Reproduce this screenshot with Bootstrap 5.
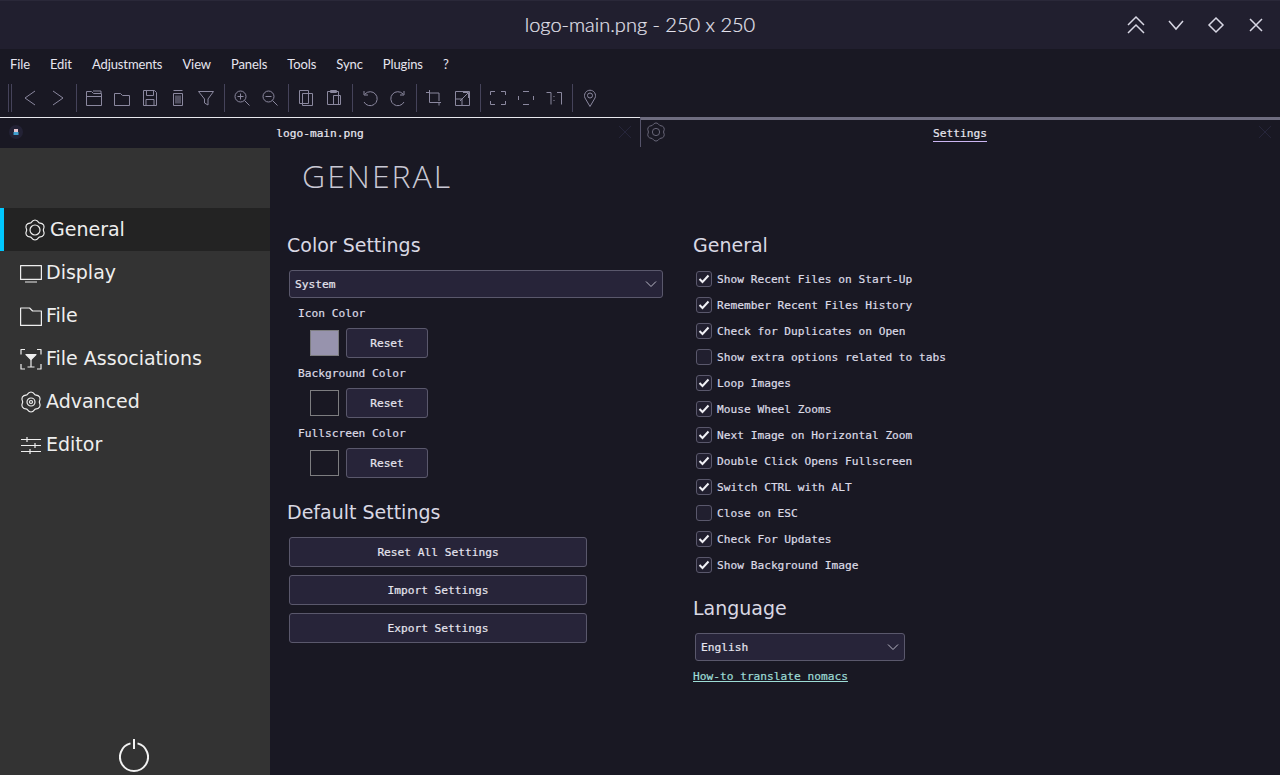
<!DOCTYPE html>
<html lang="en"><head><meta charset="utf-8"><title>nomacs</title>
<link href="https://cdn.jsdelivr.net/npm/bootstrap@5.3.0/dist/css/bootstrap.min.css" rel="stylesheet">
<style>
html,body{height:775px;overflow:hidden}
body{background:#191823;color:#dcdbe6;font-family:"DejaVu Sans Mono",monospace;font-size:11.2px;-webkit-text-stroke:.2px}
svg{display:block;fill:none;stroke-width:1}
.ttl{height:49px;background:#211f2f;border-top:1px solid #2a2839;position:relative;font-family:Lato,sans-serif;font-weight:300;font-size:20px;color:#e4e3ee;line-height:47px;-webkit-text-stroke:.2px}
.winbtns{position:absolute;right:4px;top:4px;gap:0}
.winbtn{width:40px;height:40px;display:flex;align-items:center;justify-content:center}
.winbtn svg{stroke:#d8d7e4;stroke-width:1.5}
.menubar{height:32px;padding:0 0 0 10px;gap:20px;font-family:Lato,sans-serif;font-weight:400;font-size:13px;letter-spacing:-.1px;color:#e6e5ef;-webkit-text-stroke:0}
.tools{height:36px;padding:0 0 2px 8px}
.hnd{width:1px;height:28px;background:#45435a;margin-right:2px}
.hnd+.hnd{margin-right:4px}
.tsep{width:8px;height:28px;display:flex;justify-content:center}
.tsep::before{content:"";width:1px;background:#45435a}
.tbtn{width:28px;height:28px;display:flex;align-items:center;justify-content:center}
.tbtn svg{stroke:#8b889f}
.tabstrip{height:31px;border-top:1px solid #e8e8ee}
.tabcell{width:640px;height:30px;position:relative;font-size:11.2px}
.tabcell.act{border-left:1px solid #55536a;border-top:3px solid #6f6d80;height:30px;margin-top:-1px;padding-right:1px}
.tabico{position:absolute;left:5px;top:4px}
.tabx{position:absolute;right:8px;top:7px;stroke:#26253a}
.tablbl{color:#e8e7f0;padding-top:2px}
.act .tablbl{border-bottom:1px solid #cbb6f2;line-height:15px;padding-top:0}
.mainrow{height:627px}
.side{width:270px;background:#333;color:#eee;font-family:"DejaVu Sans",sans-serif;font-size:19px;padding-top:60px;position:relative;-webkit-text-stroke:0}
.sitem{height:43px;padding-left:20px;gap:4px}
.sitem svg{stroke:#eee;stroke-width:1.2;stroke-linejoin:round}
.sitem.cur{background:#232323;border-left:4px solid #00c8ff}
.powr{position:absolute;left:119px;bottom:2px;stroke:#f2f2f2;stroke-width:2}
.pane{flex:1;position:relative}
.bigttl{font-family:"Open Sans",sans-serif;font-weight:300;font-size:32px;letter-spacing:2px;color:#c9c8d4;padding:6px 0 0 32px;line-height:44px;height:60px;-webkit-text-stroke:0}
.cols{padding-left:17px}
.colL{width:406px}
.sect{font-family:"DejaVu Sans",sans-serif;font-size:19px;color:#d9d8e4;line-height:24px;height:24px;-webkit-text-stroke:0}
.selx{background-color:#272439;border:1px solid #5a586c;border-radius:3px;color:#e6e5ef;font-size:11.2px;height:28px;line-height:26px;padding:1px 24px 0 5px;margin-left:2px;width:374px;background-position:right 4px center;background-size:14px 14px;background-image:url("data:image/svg+xml,%3csvg xmlns='http://www.w3.org/2000/svg' viewBox='0 0 14 14'%3e%3cpath fill='none' stroke='%23b9b8c6' d='M2 4.500l5 5 5-5'/%3e%3c/svg%3e");font-family:inherit}
.langsel{width:210px}
.swbtn{background:#272439;border:1px solid #5a586c;border-radius:3px;color:#e6e5ef;font-size:11.2px;height:30px;padding:1px 0 0;line-height:28px;--bs-btn-hover-bg:#272439}
.clrlab{height:30px;line-height:30px;padding:1px 0 0 11px}
.clrrow{height:30px;padding-left:23px;gap:7px}
.swatch{width:29px;height:26px;border:1px solid #7d7d80}
.rsbtn{width:82px}
.stbtn{width:298px;display:block;margin:0 0 8px 2px}
.chk{height:26px;padding-left:3px;gap:5px;margin:0;min-height:0}
.chk .form-check-input{width:16px;height:16px;margin:-2px 0 0;float:none;background-color:#211f2f;border:1px solid #5a586c;border-radius:3px}
.chk .form-check-input:checked{background-image:url("data:image/svg+xml,%3csvg xmlns='http://www.w3.org/2000/svg' viewBox='0 0 16 16'%3e%3cpath fill='none' stroke='%23f0f0f5' stroke-width='2' d='M3.500 8l3 3 6-6.500'/%3e%3c/svg%3e");background-size:16px}
.lnk{color:#9ddcd6;font-size:11.2px;display:block;line-height:16px}
</style></head><body>
<svg width="0" height="0" class="position-absolute"><defs><path id="gearshape" d="M6.850 3.810Q11-1.800 15.150 3.810Q22.090 4.600 19.300 11Q22.090 17.400 15.150 18.190Q11 23.800 6.850 18.190Q-.09 17.400 2.700 11Q-.09 4.600 6.850 3.810Z"/></defs></svg>
<div class="ttl text-center">logo-main.png - 250 x 250
<div class="winbtns d-flex">
<div class="winbtn"><svg width="20" height="20" viewBox="0 0 20 20"><path d="M2 10l8-8 8 8M2 18l8-8 8 8"/></svg></div>
<div class="winbtn"><svg width="20" height="20" viewBox="0 0 20 20"><path d="M3 6l7 8 7-8"/></svg></div>
<div class="winbtn"><svg width="20" height="20" viewBox="0 0 20 20"><path d="M10 3l7 7-7 7-7-7z"/></svg></div>
<div class="winbtn"><svg width="20" height="20" viewBox="0 0 20 20"><path d="M4 4l12 12M16 4L4 16"/></svg></div>
</div></div>
<div class="menubar d-flex align-items-center"><span>File</span><span>Edit</span><span>Adjustments</span><span>View</span><span>Panels</span><span>Tools</span><span>Sync</span><span>Plugins</span><span>?</span></div>
<div class="tools d-flex align-items-center">
<div class="hnd"></div><div class="hnd"></div>
<div class="tbtn"><svg width="20" height="20" viewBox="0 0 20 20"><path d="M15 3L5 10l10 7"/></svg></div>
<div class="tbtn"><svg width="20" height="20" viewBox="0 0 20 20"><path d="M5 3l10 7-10 7"/></svg></div>
<div class="tsep"></div>
<div class="tbtn"><svg width="20" height="20" viewBox="0 0 20 20"><path d="M2.500 17.500v-14h5l2 2h8v12zM2.500 8.500h15M9 3h8v2"/></svg></div>
<div class="tbtn"><svg width="20" height="20" viewBox="0 0 20 20"><path d="M2.500 17.500v-12h6l2 2h7v10z"/></svg></div>
<div class="tbtn"><svg width="20" height="20" viewBox="0 0 20 20"><path d="M3.500 2.500h11l2 2v13h-13zM6.500 2.500v5h7v-5M6 17.500v-6h8v6"/></svg></div>
<div class="tbtn"><svg width="20" height="20" viewBox="0 0 20 20"><path d="M5.500 2.500h9M5.500 5.500h9v12h-9zM8 7.500v8M10 7.500v8M12 7.500v8"/></svg></div>
<div class="tbtn"><svg width="20" height="20" viewBox="0 0 20 20"><path d="M2.500 3.500h15L12 11v6l-3.500-2v-4z"/></svg></div>
<div class="tsep"></div>
<div class="tbtn"><svg width="20" height="20" viewBox="0 0 20 20"><circle cx="8.500" cy="8.500" r="5.500"/><path d="M12.500 12.500l5 5M8.500 5.500v6M5.500 8.500h6"/></svg></div>
<div class="tbtn"><svg width="20" height="20" viewBox="0 0 20 20"><circle cx="8.500" cy="8.500" r="5.500"/><path d="M12.500 12.500l5 5M5.500 8.500h6"/></svg></div>
<div class="tsep"></div>
<div class="tbtn"><svg width="20" height="20" viewBox="0 0 20 20"><path d="M3.500 2.500h9v13h-9zM6.500 5.500h10v12h-10z"/></svg></div>
<div class="tbtn"><svg width="20" height="20" viewBox="0 0 20 20"><path d="M3.500 3.500h11v13h-11zM6.500 2.500h6v2h-6zM9.500 7.500h7v9h-7z"/></svg></div>
<div class="tsep"></div>
<div class="tbtn"><svg width="20" height="20" viewBox="0 0 20 20" stroke-width="1.300"><path d="M5 6a7 7 0 1 1-1 8M4 3v4h4"/></svg></div>
<div class="tbtn"><svg width="20" height="20" viewBox="0 0 20 20" stroke-width="1.300"><path d="M15 6a7 7 0 1 0 1 8M16 3v4h-4"/></svg></div>
<div class="tsep"></div>
<div class="tbtn"><svg width="20" height="20" viewBox="0 0 20 20"><path d="M2 4.500h3M5.500 2v12.500H17M5.500 5h9.500v8M15 15v2.500"/></svg></div>
<div class="tbtn"><svg width="20" height="20" viewBox="0 0 20 20"><path d="M3.500 3.500h14v14h-14zM3.500 11h6.500v6.500M8 13l8-8M11 4.500h5.500V10"/></svg></div>
<div class="tsep"></div>
<div class="tbtn"><svg width="20" height="20" viewBox="0 0 20 20"><path d="M2.500 7V3.500H7M13 3.500h4.500V7M2.500 13v3.500H7M13 16.500h4.500V13"/></svg></div>
<div class="tbtn"><svg width="20" height="20" viewBox="0 0 20 20"><path d="M7 3.500h6M7 16.500h6M2.500 8v4M17.500 8v4"/></svg></div>
<div class="tbtn"><svg width="20" height="20" viewBox="0 0 20 20"><path d="M2.500 4.500h4.500v12M13 4.500h4.500v12M10 8v1M10 12v1"/></svg></div>
<div class="tsep"></div>
<div class="tbtn"><svg width="20" height="20" viewBox="0 0 20 20"><path d="M10 18.500L5 10a5.500 5.500 0 1 1 10 0z"/><circle cx="10" cy="7.500" r="2.500"/></svg></div>
</div>
<div class="tabstrip d-flex">
<div class="tabcell d-flex align-items-center justify-content-center">
<svg class="tabico" width="22" height="20" viewBox="0 0 22 20"><circle cx="11" cy="10" r="7" fill="#232235" stroke="none"/><rect x="9" y="7" width="4" height="3" fill="#e6c6d0" stroke="none"/><rect x="8.500" y="10" width="5" height="3" fill="#3f9fd0" stroke="none"/></svg>
<span class="tablbl">logo-main.png</span>
<svg class="tabx" width="14" height="14" viewBox="0 0 14 14"><path d="M1 1l12 12M13 1L1 13"/></svg></div>
<div class="tabcell act d-flex align-items-center justify-content-center">
<svg class="tabico" style="top:2px" width="20" height="20" viewBox="0 0 22 22" stroke="#6f6d80"><use href="#gearshape"/><circle cx="11" cy="11" r="4"/></svg>
<span class="tablbl">Settings</span>
<svg class="tabx" style="top:5px" width="14" height="14" viewBox="0 0 14 14"><path d="M1 1l12 12M13 1L1 13"/></svg></div>
</div>
<div class="mainrow d-flex">
<nav class="side">
<div class="sitem cur d-flex align-items-center"><svg width="22" height="22" viewBox="0 0 22 22"><use href="#gearshape"/><circle cx="11" cy="11" r="5"/></svg><span>General</span></div>
<div class="sitem d-flex align-items-center"><svg width="22" height="22" viewBox="0 0 22 22"><path d="M.6 3.600h20.800v13.800H.6zM5 20h12"/></svg><span>Display</span></div>
<div class="sitem d-flex align-items-center"><svg width="22" height="22" viewBox="0 0 22 22"><path d="M.6 20.400V3h9l3 3h8.800v14.400z"/></svg><span>File</span></div>
<div class="sitem d-flex align-items-center"><svg width="22" height="22" viewBox="0 0 22 22"><path d="M5 1.500H1v5M17 1.500h4v5M1 16v5h4M21 16v5h-4"/><path d="M6 6.500h10l-5 5z" fill="#eee"/><path d="M11 11v7.500M7.500 19h7"/></svg><span>File Associations</span></div>
<div class="sitem d-flex align-items-center"><svg width="22" height="22" viewBox="0 0 22 22"><use href="#gearshape"/><circle cx="11" cy="11" r="4"/><circle cx="11" cy="11" r="1.500"/></svg><span>Advanced</span></div>
<div class="sitem d-flex align-items-center"><svg width="22" height="22" viewBox="0 0 22 22"><path d="M1 5.500h20M1 11.500h20M1 17.500h20M7 3v5M15 9v5M10 15v5"/></svg><span>Editor</span></div>
<svg class="powr" width="30" height="34" viewBox="0 0 30 34"><path d="M11.500 4.400a14 14 0 1 0 7 0M15 0v10"/></svg>
</nav>
<main class="pane">
<div class="bigttl">GENERAL</div>
<div class="cols d-flex">
<div class="colL">
<div class="sect" style="margin-top:25px;margin-bottom:13px">Color Settings</div>
<select class="form-select selx" aria-label="Color"><option>System</option></select>
<div class="clrlab">Icon Color</div>
<div class="clrrow d-flex align-items-center"><div class="swatch" style="background:#9793ad"></div><button class="btn swbtn rsbtn">Reset</button></div>
<div class="clrlab">Background Color</div>
<div class="clrrow d-flex align-items-center"><div class="swatch"></div><button class="btn swbtn rsbtn">Reset</button></div>
<div class="clrlab">Fullscreen Color</div>
<div class="clrrow d-flex align-items-center"><div class="swatch"></div><button class="btn swbtn rsbtn">Reset</button></div>
<div class="sect" style="margin-top:22px;margin-bottom:13px">Default Settings</div>
<button class="btn swbtn stbtn">Reset All Settings</button>
<button class="btn swbtn stbtn">Import Settings</button>
<button class="btn swbtn stbtn">Export Settings</button>
</div>
<div>
<div class="sect" style="margin-top:25px;margin-bottom:10px">General</div>
<label class="chk form-check d-flex align-items-center"><input class="form-check-input" type="checkbox" checked><span>Show Recent Files on Start-Up</span></label>
<label class="chk form-check d-flex align-items-center"><input class="form-check-input" type="checkbox" checked><span>Remember Recent Files History</span></label>
<label class="chk form-check d-flex align-items-center"><input class="form-check-input" type="checkbox" checked><span>Check for Duplicates on Open</span></label>
<label class="chk form-check d-flex align-items-center"><input class="form-check-input" type="checkbox"><span>Show extra options related to tabs</span></label>
<label class="chk form-check d-flex align-items-center"><input class="form-check-input" type="checkbox" checked><span>Loop Images</span></label>
<label class="chk form-check d-flex align-items-center"><input class="form-check-input" type="checkbox" checked><span>Mouse Wheel Zooms</span></label>
<label class="chk form-check d-flex align-items-center"><input class="form-check-input" type="checkbox" checked><span>Next Image on Horizontal Zoom</span></label>
<label class="chk form-check d-flex align-items-center"><input class="form-check-input" type="checkbox" checked><span>Double Click Opens Fullscreen</span></label>
<label class="chk form-check d-flex align-items-center"><input class="form-check-input" type="checkbox" checked><span>Switch CTRL with ALT</span></label>
<label class="chk form-check d-flex align-items-center"><input class="form-check-input" type="checkbox"><span>Close on ESC</span></label>
<label class="chk form-check d-flex align-items-center"><input class="form-check-input" type="checkbox" checked><span>Check For Updates</span></label>
<label class="chk form-check d-flex align-items-center"><input class="form-check-input" type="checkbox" checked><span>Show Background Image</span></label>
<div class="sect" style="margin-top:17px;margin-bottom:13px">Language</div>
<select class="form-select selx langsel" aria-label="Language"><option>English</option></select>
<a href="#" class="lnk mt-2">How-to translate nomacs</a>
</div>
</div>
</main>
</div>
</body></html>
